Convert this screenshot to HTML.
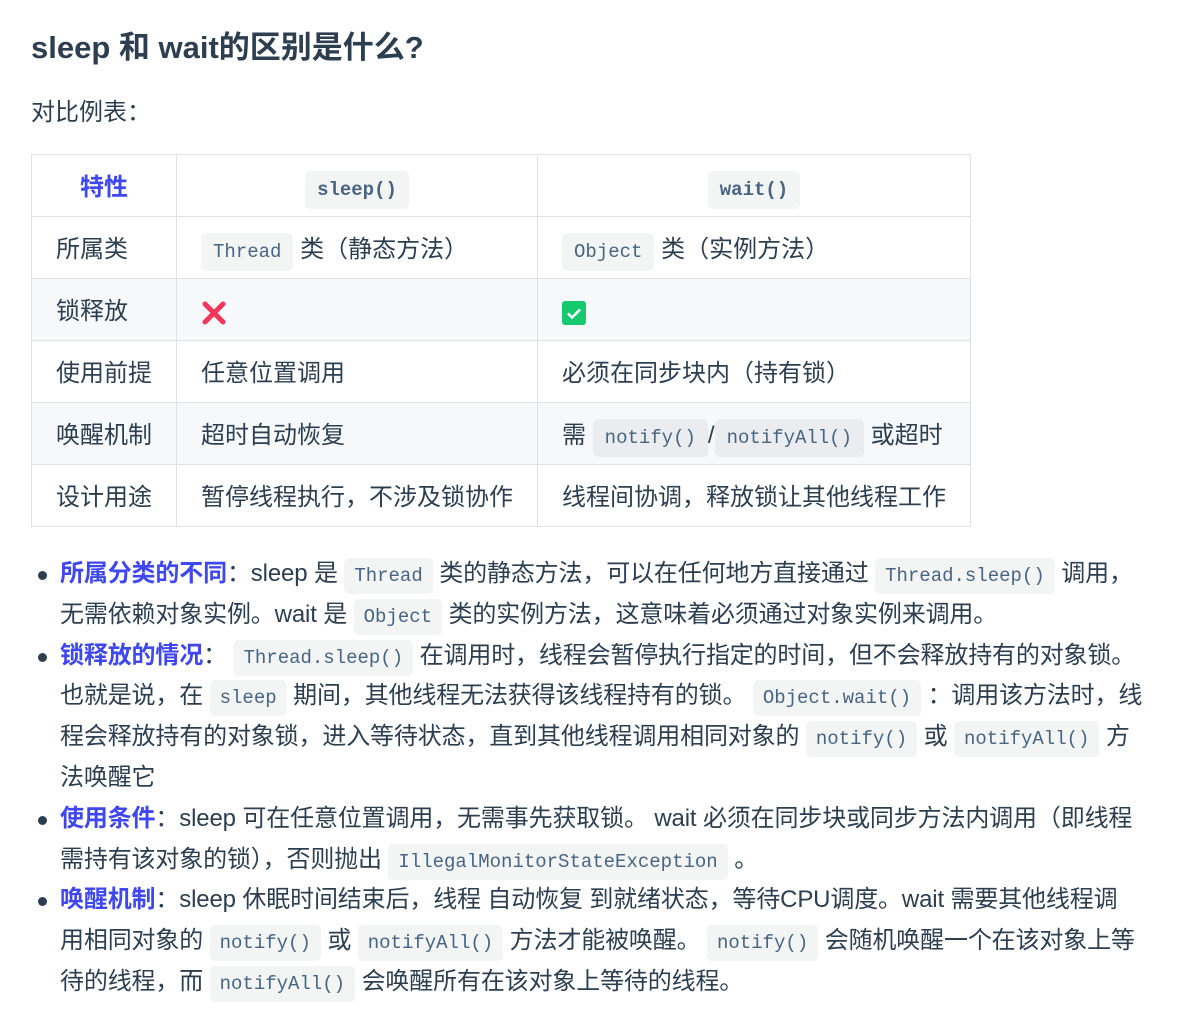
<!DOCTYPE html>
<html><head><meta charset="utf-8"><style>
body{margin:0;background:#fff;color:#2c3e50;font-family:"Liberation Sans","Noto Sans CJK SC",sans-serif;font-size:24px;}
.w{position:absolute;left:31px;top:0;width:1115px}
h2{font-size:31px;font-weight:bold;margin:0;position:absolute;top:27px;left:0;white-space:nowrap;line-height:42px}
.p{position:absolute;top:96px;left:0;line-height:34px}
table{position:absolute;top:154px;left:0;border-collapse:collapse;width:940px}
td,th{border:1px solid #dfe2e5;height:56px;padding:5px 0 0 24px;text-align:left;white-space:nowrap;line-height:30px}
th{font-weight:normal;text-align:center;padding:5px 0 0 0}
th.b{color:#3e47f0;font-weight:bold}
tr:nth-child(2n+1) td{background:#f6f8fa}
code{font-family:"Liberation Mono",monospace;font-size:19px;line-height:1;color:#476582;background:#f3f4f4;border-radius:5px;padding:8px 12px}
tr:nth-child(2n+1) td code{background:#eaecef}
th code{font-weight:bold}
ul{position:absolute;top:554px;left:0;margin:0;padding:0 0 0 29px;width:1100px;line-height:40.8px;list-style:none;letter-spacing:-0.15px}
li{position:relative;white-space:nowrap}
li:before{content:"";position:absolute;left:-22px;top:17px;width:9px;height:9px;border-radius:50%;background:#2c3e50}
li b{color:#3e47f0}
li code{padding:7px 10px;letter-spacing:0}
</style></head><body><div class="w">
<h2>sleep 和 wait的区别是什么?</h2>
<div class="p">对比例表：</div>
<table>
<tr><th class="b" style="width:144px">特性</th><th style="width:360px"><code>sleep()</code></th><th><code>wait()</code></th></tr>
<tr><td>所属类</td><td><code>Thread</code> 类（静态方法）</td><td><code>Object</code> 类（实例方法）</td></tr>
<tr><td>锁释放</td><td><svg width="26" height="26" viewBox="0 0 26 26" style="vertical-align:middle"><path d="M4 4L22 22M22 4L4 22" stroke="#f4365a" stroke-width="5" stroke-linecap="round"/></svg></td><td><svg width="24" height="24" viewBox="0 0 24 24" style="vertical-align:middle"><rect width="24" height="24" rx="3" fill="#14c96e"/><path d="M6 12.5l4 4 8-8" stroke="#fff" stroke-width="2.6" fill="none"/></svg></td></tr>
<tr><td>使用前提</td><td>任意位置调用</td><td>必须在同步块内（持有锁）</td></tr>
<tr><td>唤醒机制</td><td>超时自动恢复</td><td>需 <code>notify()</code>/<code>notifyAll()</code> 或超时</td></tr>
<tr><td>设计用途</td><td>暂停线程执行，不涉及锁协作</td><td>线程间协调，释放锁让其他线程工作</td></tr>
</table>
<ul>
<li><b>所属分类的不同</b>：sleep 是 <code>Thread</code> 类的静态方法，可以在任何地方直接通过 <code>Thread.sleep()</code> 调用，<br>无需依赖对象实例。wait 是 <code>Object</code> 类的实例方法，这意味着必须通过对象实例来调用。</li>
<li><b>锁释放的情况</b>： <code>Thread.sleep()</code> 在调用时，线程会暂停执行指定的时间，但不会释放持有的对象锁。<br>也就是说，在 <code>sleep</code> 期间，其他线程无法获得该线程持有的锁。 <code>Object.wait()</code> ：调用该方法时，线<br>程会释放持有的对象锁，进入等待状态，直到其他线程调用相同对象的 <code>notify()</code> 或 <code>notifyAll()</code> 方<br>法唤醒它</li>
<li><b>使用条件</b>：sleep 可在任意位置调用，无需事先获取锁。 wait 必须在同步块或同步方法内调用（即线程<br>需持有该对象的锁），否则抛出 <code>IllegalMonitorStateException</code> 。</li>
<li><b>唤醒机制</b>：sleep 休眠时间结束后，线程 自动恢复 到就绪状态，等待CPU调度。wait 需要其他线程调<br>用相同对象的 <code>notify()</code> 或 <code>notifyAll()</code> 方法才能被唤醒。 <code>notify()</code> 会随机唤醒一个在该对象上等<br>待的线程，而 <code>notifyAll()</code> 会唤醒所有在该对象上等待的线程。</li>
</ul>
</div></body></html>
